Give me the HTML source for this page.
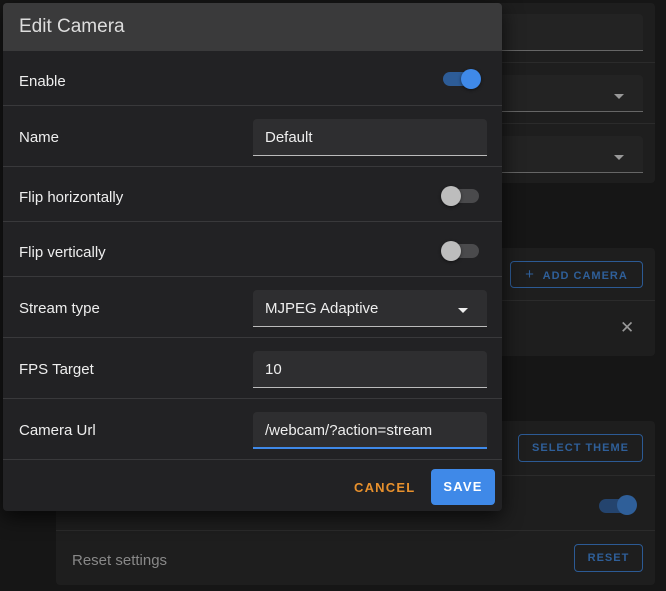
<!DOCTYPE html><html><head><style>
*{box-sizing:border-box;margin:0;padding:0}
body{width:666px;height:591px;background:#161616;position:relative;overflow:hidden;font-family:"Liberation Sans",sans-serif;color:#eee}
.a{position:absolute}
.card{position:absolute;background:#1e1e1e;border-radius:4px}
.fld{position:absolute;background:#232323;border-bottom:1px solid #666;border-radius:4px 4px 0 0}
.ob{position:absolute;border:1px solid #2c5a94;border-radius:4px;color:#2f5f99;font-size:11px;letter-spacing:1px;text-align:center;font-weight:bold;white-space:nowrap}
.dlg{position:absolute;left:3px;top:3px;width:499px;height:508px;background:#222224;border-radius:4px;box-shadow:0 6px 20px rgba(0,0,0,.7);overflow:hidden}
.title{height:48px;background:#3a3a3b;font-size:19px;padding:13px 16px;color:#ddd}
.row{position:absolute;left:0;width:499px;border-top:1px solid #39393b;font-size:15px}
.row .l{position:absolute;left:16px}
.in{position:absolute;left:250px;width:234px;height:37px;background:#2e2e30;border-bottom:1px solid #bbb;border-radius:4px 4px 0 0;font-size:15px;padding:10px 12px;color:#eee}
.sw{position:absolute;left:440px;width:36px;height:14px;border-radius:7px;background:#4a4a4c}
.sw i{position:absolute;top:-3px;width:20px;height:20px;border-radius:50%;background:#bdbdbd;left:-2px;box-shadow:0 1px 3px rgba(0,0,0,.5)}
.caret{position:absolute;width:0;height:0;border-left:5px solid transparent;border-right:5px solid transparent;border-top:5px solid #eee}
</style></head><body>
<div class="card" style="left:56px;top:3px;width:599px;height:180px"></div>
<div class="fld" style="left:490px;top:14px;width:153px;height:37px"></div>
<div class="a" style="left:490px;top:62px;width:165px;height:1px;background:#2b2b2b"></div>
<div class="fld" style="left:490px;top:75px;width:153px;height:37px"></div>
<div class="caret" style="left:614px;top:94px;border-top-color:#999"></div>
<div class="a" style="left:490px;top:123px;width:165px;height:1px;background:#2b2b2b"></div>
<div class="fld" style="left:490px;top:136px;width:153px;height:37px"></div>
<div class="caret" style="left:614px;top:155px;border-top-color:#999"></div>
<div class="card" style="left:56px;top:248px;width:599px;height:108px"></div>
<div class="ob" style="left:510px;top:261px;width:133px;height:27px;line-height:25px"><span style="font-size:15px;font-weight:normal">+</span>&nbsp; ADD CAMERA</div>
<div class="a" style="left:490px;top:300px;width:165px;height:1px;background:#2b2b2b"></div>
<div class="a" style="left:620px;top:318px;color:#999;font-size:17px">✕</div>
<div class="card" style="left:56px;top:421px;width:599px;height:164px"></div>
<div class="ob" style="left:518px;top:434px;width:125px;height:28px;line-height:26px">SELECT THEME</div>
<div class="a" style="left:490px;top:475px;width:165px;height:1px;background:#2b2b2b"></div>
<div class="a" style="left:599px;top:499px;width:36px;height:14px;border-radius:7px;background:#24446e"></div>
<div class="a" style="left:617px;top:495px;width:20px;height:20px;border-radius:50%;background:#2f5f99"></div>
<div class="a" style="left:56px;top:530px;width:599px;height:1px;background:#2b2b2b"></div>
<div class="a" style="left:72px;top:552px;font-size:15px;color:#888">Reset settings</div>
<div class="ob" style="left:574px;top:544px;width:69px;height:28px;line-height:26px">RESET</div>

<div class="dlg">
<div class="title">Edit Camera</div>
<div class="row" style="top:48px;height:54px;border-top:none"><span class="l" style="top:22px">Enable</span>
<div class="sw" style="top:21px;background:#2d5c97"><i style="left:18px;background:#3f89e8"></i></div></div>
<div class="row" style="top:102px;height:61px"><span class="l" style="top:23px">Name</span><div class="in" style="top:13px">Default</div></div>
<div class="row" style="top:163px;height:55px"><span class="l" style="top:22px">Flip horizontally</span><div class="sw" style="top:22px"><i></i></div></div>
<div class="row" style="top:218px;height:55px"><span class="l" style="top:22px">Flip vertically</span><div class="sw" style="top:22px"><i></i></div></div>
<div class="row" style="top:273px;height:61px"><span class="l" style="top:23px">Stream type</span><div class="in" style="top:13px">MJPEG Adaptive<div class="caret" style="left:205px;top:18px"></div></div></div>
<div class="row" style="top:334px;height:61px"><span class="l" style="top:23px">FPS Target</span><div class="in" style="top:13px">10</div></div>
<div class="row" style="top:395px;height:61px"><span class="l" style="top:23px">Camera Url</span><div class="in" style="top:13px;border-bottom:2px solid #3f89e8">/webcam/?action=stream</div></div>
<div class="row" style="top:456px;height:52px">
<span class="a" style="left:351px;top:20px;color:#e8912d;font-size:13px;font-weight:bold;letter-spacing:1.2px">CANCEL</span>
<div class="a" style="left:428px;top:9px;width:64px;height:36px;background:#3f89e8;border-radius:4px;color:#fff;font-size:13px;font-weight:bold;letter-spacing:1.2px;text-align:center;line-height:36px">SAVE</div>
</div>
</div>
</body></html>
